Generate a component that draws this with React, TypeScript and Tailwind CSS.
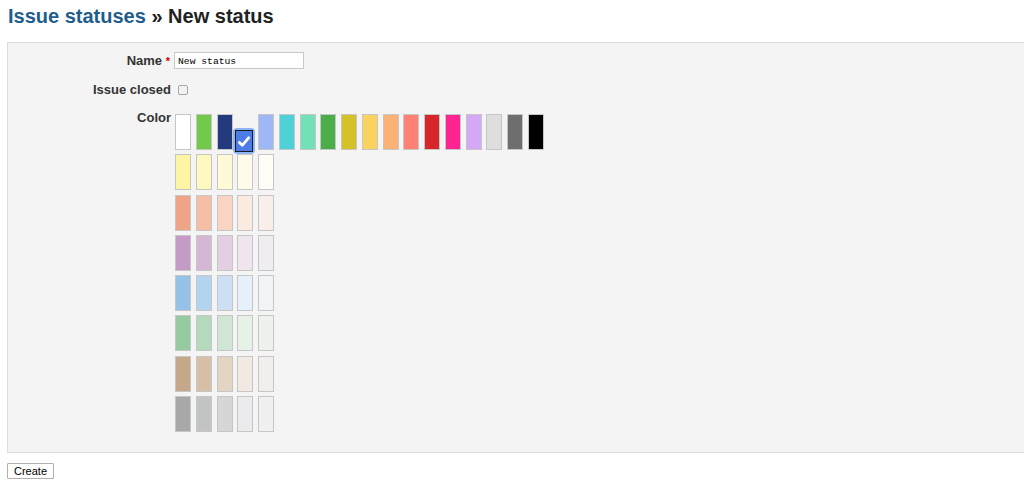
import React from "react";

const row1 = [
  "#ffffff", "#72c94a", "#233a7c", "SEL", "#9eb8f7", "#4ed0d7", "#74e0b7", "#4cae4a", "#d4c027",
  "#f9d25f", "#fcb274", "#fd8174", "#d6282b", "#fd2391", "#d4a8f7", "#dedede", "#6e6e6e", "#000000",
];

const rows = [
  ["#fef5a4", "#fef8c0", "#fefad7", "#fffbea", "#fffdf5"],
  ["#f0a487", "#f5bea5", "#f9d4c2", "#fbeae0", "#f9eeea"],
  ["#c49bc4", "#d5b6d4", "#e2d0e2", "#f0e5ef", "#f0edf0"],
  ["#95c2e6", "#b3d4ef", "#cde0f3", "#e6f0fa", "#f0f4f7"],
  ["#96ca9f", "#b4d9bc", "#d0e5d4", "#e6f2e7", "#eef2ed"],
  ["#c4a889", "#d6bfa6", "#e2d5c3", "#f2e9e2", "#f1eeec"],
  ["#a8a8a8", "#c2c3c5", "#d6d6d6", "#ebebed", "#f0f0f0"],
];

function Swatch({ c }: { c: string }) {
  if (c === "SEL") {
    return (
      <div className="relative w-4 h-9 shrink-0">
        <div className="absolute left-[-4px] top-[14px] w-[22px] h-[26px] rounded-[4px] bg-[#8fb5f7] p-[2px]">
          <div className="w-full h-full border border-[#1c1c1c] bg-[#4d7ce6] flex items-center justify-center">
            <svg width="12" height="11" viewBox="0 0 12 11">
              <path d="M1.4 6.4 L4.3 9.3 L10.6 1.8" fill="none" stroke="#ffffff" strokeWidth="2.8" strokeLinecap="round" strokeLinejoin="round" />
            </svg>
          </div>
        </div>
      </div>
    );
  }
  return <div className="w-4 h-9 shrink-0 border border-[#c6c6c6]" style={{ backgroundColor: c }} />;
}

export default function App() {
  return (
    <div className="w-[1024px] h-[483px] overflow-hidden bg-white font-['Liberation_Sans',Arial,sans-serif] text-[#333]">
      <div className="pt-[5px] pl-2 text-[20px] leading-[23px] font-bold">
        <span className="text-[#1f5d8c]">Issue statuses</span>
        <span className="text-[#222]"> » New status</span>
      </div>
      <div className="mt-[14px] ml-[7px] mr-[-20px] border border-[#dddddd] bg-[#f4f4f4] pt-[9px] pb-[20px]">
        <div className="flex items-center h-[17px]">
          <div className="w-[163px] text-right text-[13px] font-bold leading-[16px] text-[#333] pr-[1px]">
            Name <span className="text-[#cc0000] text-[11px] align-top">*</span>
          </div>
          <div className="ml-[3px] w-[130px] h-[17px] border border-[#c8c8c8] bg-white flex items-center px-[3px] pt-[2px] font-['Liberation_Mono',monospace] text-[9.7px] leading-[12px] text-black">
            New status
          </div>
        </div>
        <div className="flex items-center h-[19px] mt-[11px]">
          <div className="w-[163px] text-right text-[13px] font-bold leading-[16px] text-[#333]">Issue closed</div>
          <div className="ml-[7px] w-[10px] h-[10px] rounded-[2px] border border-[#a8a8a8] bg-[#f2f2f2]" />
        </div>
        <div className="flex items-start mt-[10px]">
          <div className="w-[163px] mt-[1px] text-right text-[13px] font-bold leading-[16px] text-[#333]">Color</div>
          <div className="ml-[4px] mt-[5px] flex flex-col gap-y-[4.3px]">
            <div className="flex gap-x-[4.75px]">
              {row1.map((c, i) => (
                <Swatch key={i} c={c} />
              ))}
            </div>
            {rows.map((r, i) => (
              <div key={i} className="flex gap-x-[4.75px]">
                {r.map((c, j) => (
                  <Swatch key={j} c={c} />
                ))}
              </div>
            ))}
          </div>
        </div>
      </div>
      <div className="flex mt-[10px] ml-[7px]">
        <button className="flex items-center justify-center h-[16px] w-[47px] border border-[#b0b0b0] bg-white text-[11px] leading-[14px] text-black rounded-[1px]">
          Create
        </button>
      </div>
    </div>
  );
}
